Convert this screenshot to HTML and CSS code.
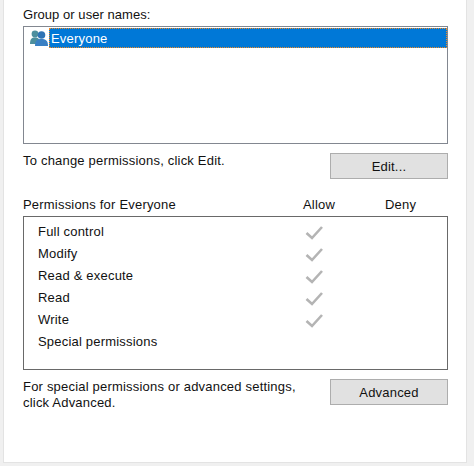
FILE: index.html
```html
<!DOCTYPE html>
<html lang="en">
<head>
  <meta charset="UTF-8">
  <title>Security</title>
  <link rel="stylesheet" href="styles.css">
</head>
<body>

<div class="panel">
  <div class="etiqueta">Group or user names:</div>

  <div class="lista">
    <div class="usuario">
      <svg class="icono" width="18" height="17" viewBox="0 0 18 17">
        <circle cx="5" cy="4" r="3.400" fill="#4d8f9e"/>
        <path d="M0 14c0-5 1.500-6.500 5-6.500s5 1.500 5 6.500z" fill="#4d8f9e"/>
        <circle cx="11.500" cy="5" r="3.800" fill="#2f74b5"/>
        <path d="M5 16c0-5.500 2.500-7 6.500-7s6.500 1.500 6.500 7z" fill="#3a80c4"/>
      </svg>
      <span class="seleccionado">Everyone</span>
    </div>
  </div>

  <div class="fila-accion fila-edit">
    <span>To change permissions, click Edit.</span>
    <button class="boton">Edit...</button>
  </div>

  <div class="encabezado">
    <span class="col-nombre">Permissions for Everyone</span>
    <span class="col-allow">Allow</span>
    <span class="col-deny">Deny</span>
  </div>

  <div class="permisos" id="permisos"></div>

  <div class="fila-accion fila-advanced">
    <span>For special permissions or advanced settings,<br>click Advanced.</span>
    <button class="boton">Advanced</button>
  </div>
</div>

<script>
  const permisos = [
    ['Full control', true],
    ['Modify', true],
    ['Read & execute', true],
    ['Read', true],
    ['Write', true],
    ['Special permissions', false]
  ];
  const caja = document.getElementById('permisos');

  permisos.forEach(p => {
    const fila = document.createElement('div');
    fila.className = 'permiso';
    const check = p[1] ? `<svg width="18" height="16" viewBox="0 0 18 16"><path d="M1.500 9l5.500 5L17 3" fill="none" stroke="#b4b4b4" stroke-width="2.600"/></svg>` : '';
    fila.innerHTML = `<span class="permiso-nombre"></span><span class="permiso-check">${check}</span>`;
    fila.querySelector('.permiso-nombre').textContent = p[0];
    caja.appendChild(fila);
  });
</script>

</body>
</html>
```

FILE: styles.css
```css
html, body {
  height: 100%;
}

body {
  font-family: 'Liberation Sans', Arial, sans-serif;
  font-size: 13px;
  letter-spacing: 0.2px;
  color: #111;
  background-color: #f0f0f0;
  margin: 0;
  padding: 0 7px 3px 3px;
  box-sizing: border-box;
}

.panel {
  height: 100%;
  box-sizing: border-box;
  background-color: #fff;
  border: 1px solid #e3e3e3;
  border-top: 0;
  padding: 0 18px 0 19px;
}

.etiqueta {
  height: 26px;
  line-height: 16px;
  padding-top: 7px;
  box-sizing: border-box;
  letter-spacing: 0.05px;
}

.lista {
  height: 118px;
  box-sizing: border-box;
  border: 1px solid #828790;
  padding: 1px 0 0 0;
}

.usuario {
  display: flex;
  align-items: center;
  height: 20px;
}

.icono {
  margin: 0 1px 0 6px;
  flex: none;
}

.seleccionado {
  flex: 1;
  height: 20px;
  line-height: 19px;
  box-sizing: border-box;
  padding-left: 1px;
  background-color: #0078d7;
  color: #fff;
  border: 1px dotted #f08a24;
}

.fila-accion {
  display: flex;
  justify-content: space-between;
  line-height: 16px;
}

.fila-edit {
  margin-top: 9px;
  height: 26px;
}

.fila-advanced {
  margin-top: 9px;
}

.boton {
  width: 118px;
  height: 26px;
  padding: 0;
  font-family: inherit;
  font-size: 13px;
  letter-spacing: 0.2px;
  color: #111;
  background-color: #e1e1e1;
  border: 1px solid #adadad;
  flex: none;
}

.encabezado {
  display: flex;
  margin-top: 17px;
  height: 20px;
  line-height: 18px;
}

.col-nombre {
  width: 280px;
}

.col-allow {
  width: 82px;
}

.permisos {
  height: 154px;
  box-sizing: border-box;
  border: 1px solid #696969;
  padding: 3px 0 0 14px;
}

.permiso {
  display: flex;
  align-items: center;
  height: 22px;
}

.permiso-nombre {
  width: 267px;
}

.permiso-check {
  display: flex;
  position: relative;
  top: 1px;
}
```
